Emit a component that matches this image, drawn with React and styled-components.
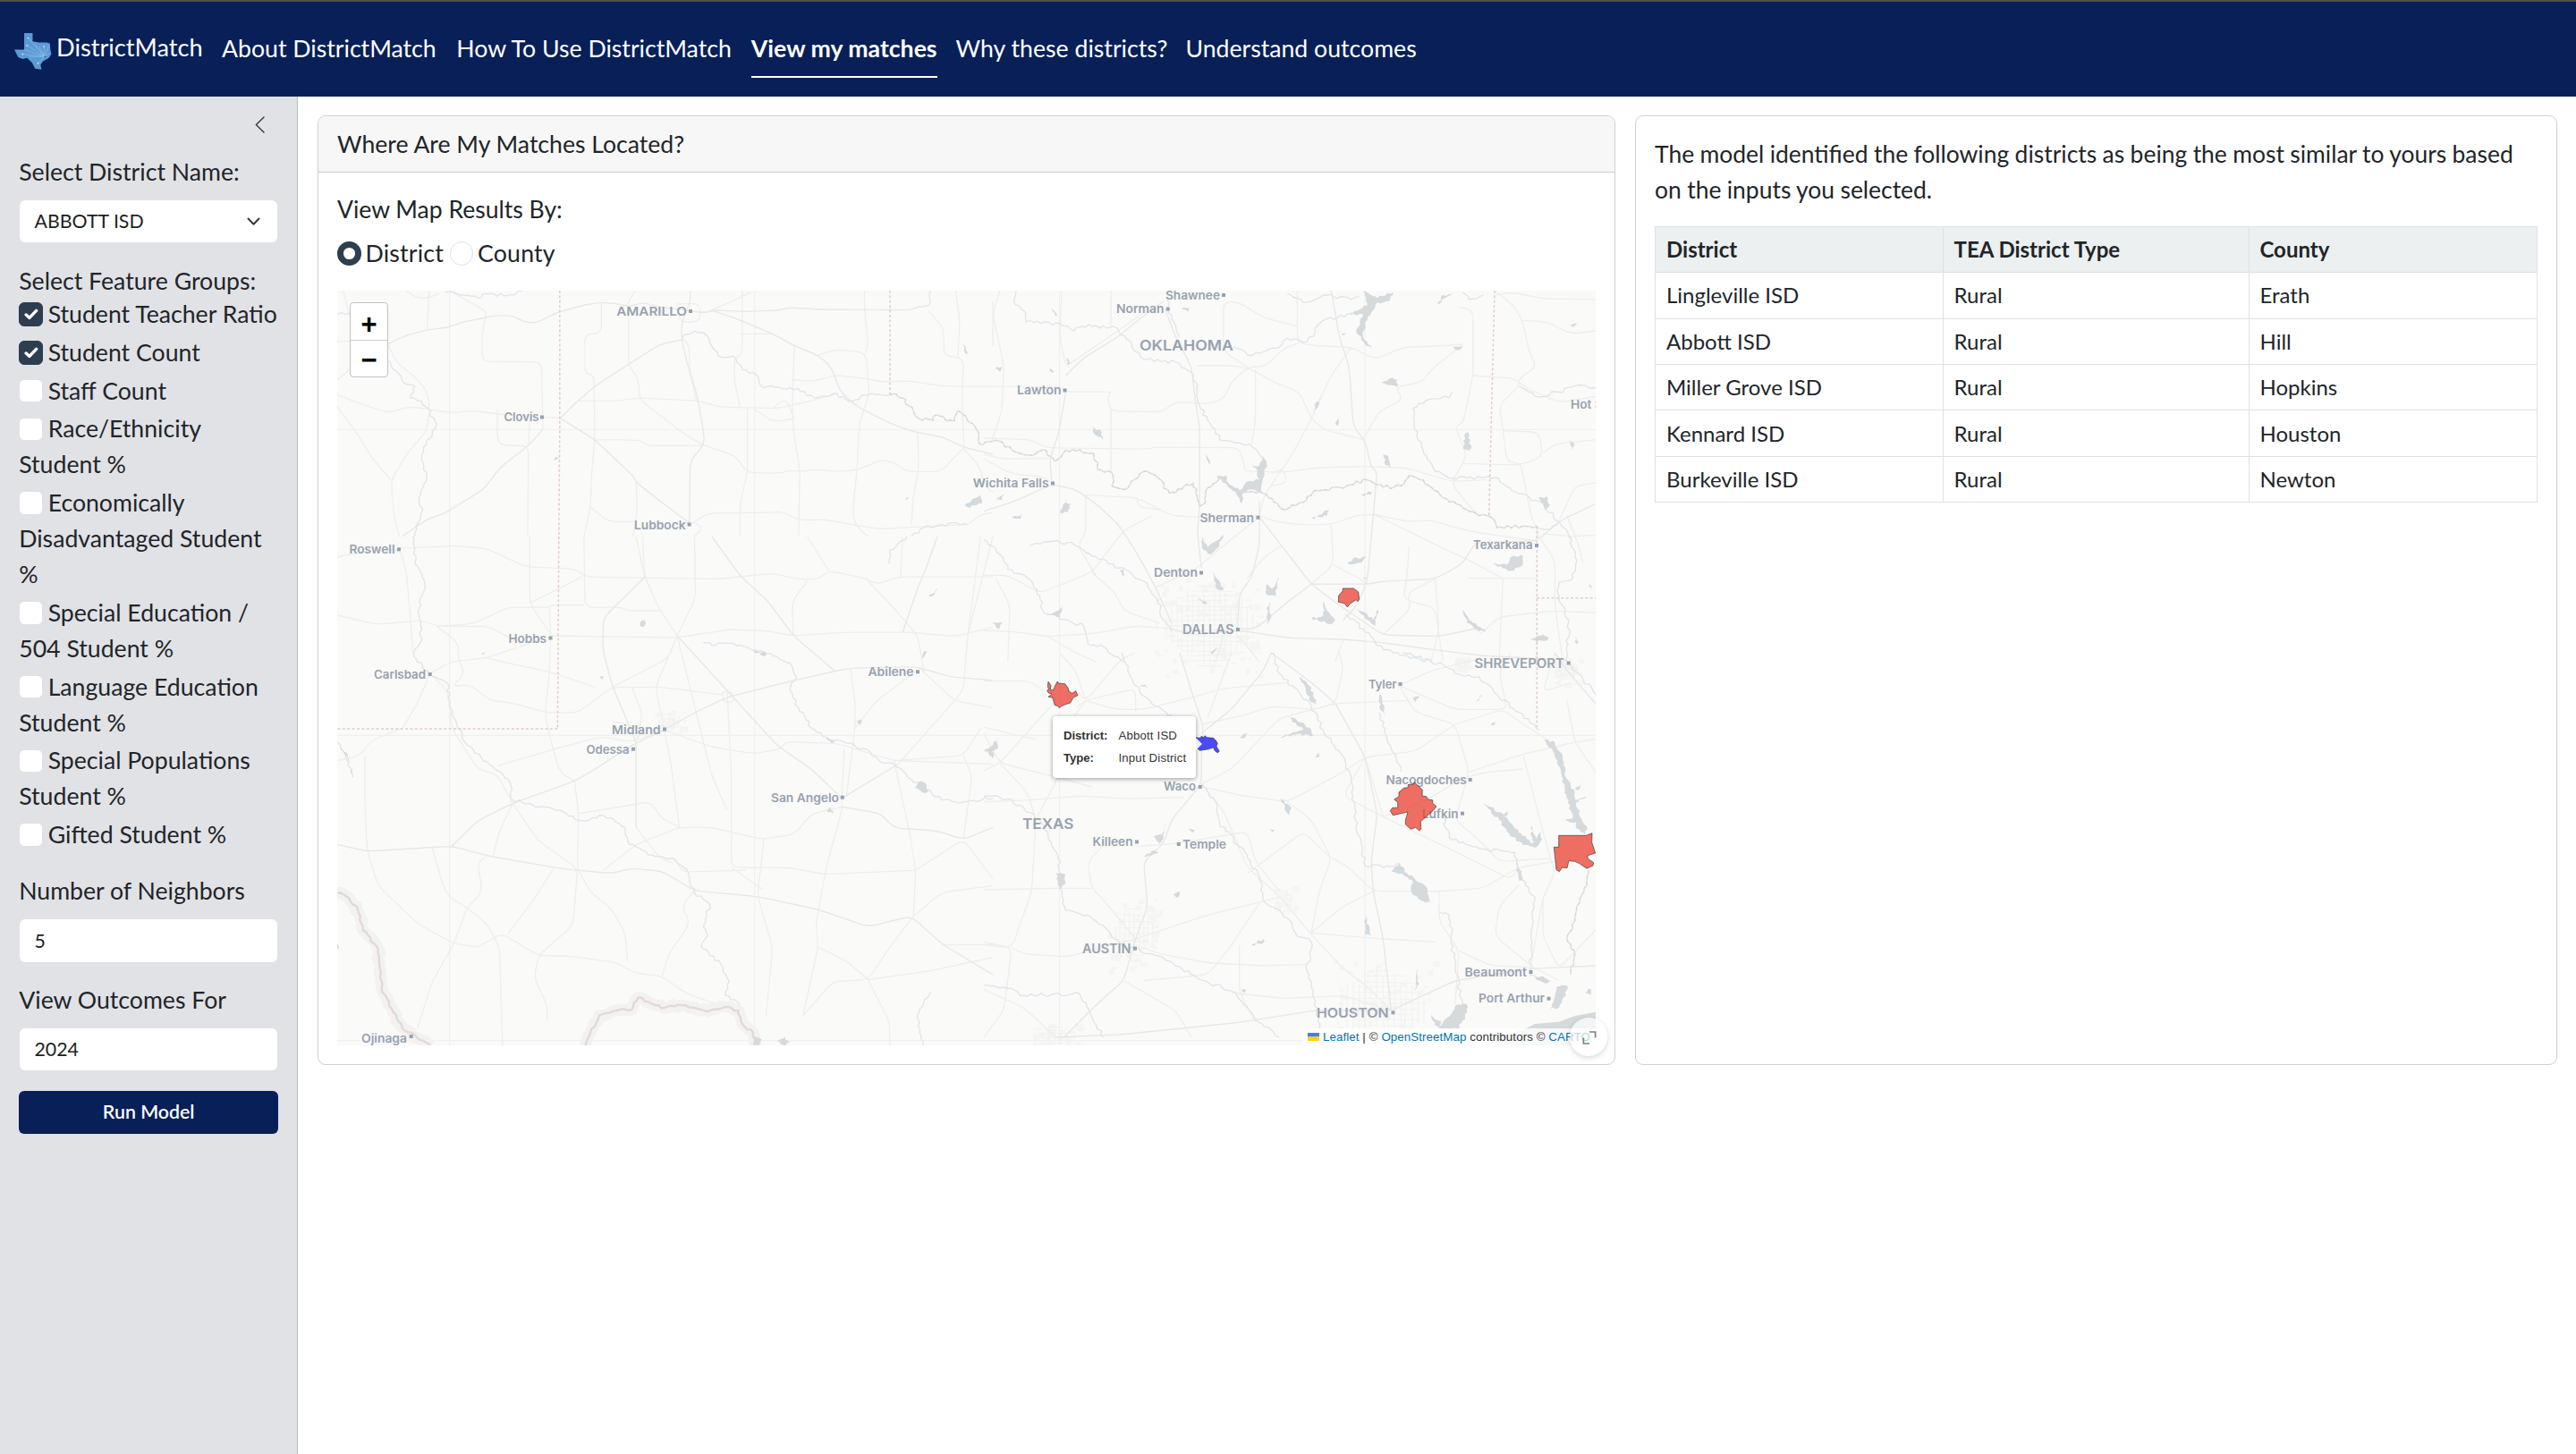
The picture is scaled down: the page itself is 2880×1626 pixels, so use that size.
import React from "react";
import styled, { createGlobalStyle } from "styled-components";

const GlobalStyle = createGlobalStyle`
  *, *::before, *::after { box-sizing: border-box; }
  html, body { margin: 0; padding: 0; background: #fff; }
  body {
    font-family: Lato, "Liberation Sans", sans-serif;
    font-size: 26.67px;
    line-height: 40px;
    color: #212529;
    -webkit-font-smoothing: antialiased;
  }
`;

const NAVY = "#081f58";

/* ---------- shell ---------- */

const Page = styled.div`
  display: flex;
  flex-direction: column;
  height: 1626px;
  overflow: hidden;
`;

const Navbar = styled.nav`
  display: flex;
  align-items: flex-start;
  height: 108px;
  padding: 31.7px 16px 0;
  border-top: 2px solid #4f4f4f;
  background: ${NAVY};
  color: #fff;
`;

const Brand = styled.div`
  display: flex;
  align-items: flex-start;
  width: 232px;
  height: 40px;
  margin-top: -1px;
  font-size: 27.2px;
  white-space: nowrap;

  svg {
    flex: none;
    width: 42px;
    height: 41px;
    margin: 4px 5px 0 0;
  }
`;

const NavItem = styled.a`
  height: 53.3px;
  margin-right: ${(p) => p.$gap}px;
  white-space: nowrap;
  color: #fff;
  font-weight: ${(p) => (p.$active ? 700 : 400)};
  border-bottom: 2px solid ${(p) => (p.$active ? "#fff" : "transparent")};
`;

const Body = styled.div`
  display: flex;
  flex: 1;
  min-height: 0;
`;

/* ---------- sidebar ---------- */

const Sidebar = styled.aside`
  flex: none;
  width: 333px;
  padding: 0 22px 0 21.2px;
  background: #e1e2e6;
  border-right: 1px solid #b9bbc0;
`;

const CollapseRow = styled.div`
  display: flex;
  justify-content: flex-end;
  height: 63.7px;
  padding: 22px 14px 0 0;
`;

const Field = styled.div`
  margin-bottom: ${(p) => p.$gap || 22}px;
`;

const FieldLabel = styled.div`
  height: 40px;
  margin-bottom: ${(p) => (p.$tight ? -3.2 : 12)}px;
  white-space: nowrap;
`;

const Control = styled.div`
  display: flex;
  align-items: center;
  justify-content: space-between;
  height: 47.8px;
  margin-left: 0.8px;
  padding: 0 19px 1.4px 16.5px;
  border-radius: 6px;
  background: #fff;
  color: #1d1f21;
  font-size: 21.33px;

  svg { margin-top: 2px; }
`;

const CheckItem = styled.div`
  margin: 0 -8px 2.76px 0;
`;

const CheckBox = styled.span`
  display: inline-flex;
  align-items: center;
  justify-content: center;
  width: 26.67px;
  height: 26.67px;
  margin: 7.2px 5.8px 0 0;
  vertical-align: top;
  border: 1.67px solid ${(p) => (p.$on ? "#2c3e50" : "#dfe1e6")};
  border-radius: 6px;
  background: ${(p) => (p.$on ? "#2c3e50" : "#fff")};
  line-height: 0;
`;

const RunButton = styled.button`
  display: block;
  width: 290px;
  height: 48px;
  margin: 0;
  padding: 0 0 2px;
  border: 0;
  border-radius: 6px;
  background: ${NAVY};
  color: #fff;
  font: 600 21.33px/46px Lato, "Liberation Sans", sans-serif;
  text-align: center;
`;

/* ---------- main ---------- */

const Main = styled.main`
  display: grid;
  grid-template-columns: 1451px 1031px;
  grid-template-rows: 1062px;
  gap: 22px;
  padding: 21px 21px 0 22px;
`;

const Card = styled.section`
  display: flex;
  flex-direction: column;
  border: 1px solid #cfd0d1;
  border-radius: 9px;
  background: #fff;
`;

const CardHeader = styled.header`
  height: 63px;
  padding: 10.7px 21px 0;
  border-bottom: 1px solid #cbcccd;
  border-radius: 8px 8px 0 0;
  background: #f7f7f7;
  font-size: 26.6px;
`;

const CardBody = styled.div`
  display: flex;
  flex-direction: column;
  flex: 1;
  padding: 21.2px 21px 21px;
`;

const MapTitle = styled.div`
  font-size: 26.55px;
`;

const RadioRow = styled.div`
  display: flex;
  align-items: flex-start;
  height: 40px;
  margin: 8.6px 0 22.2px;
`;

const RadioLabel = styled.label`
  display: flex;
  align-items: flex-start;
  margin-right: 6.4px;
  letter-spacing: 0.22px;
`;

const Radio = styled.span`
  width: 26.67px;
  height: 26.67px;
  margin: 7.6px 4.8px 0 0;
  border: ${(p) => (p.$on ? "7px solid #2c3e50" : "1.4px solid #dfe1e6")};
  border-radius: 50%;
  background: #fff;
`;

const Intro = styled.p`
  margin: 0.7px 0 21.3px;
  font-size: 26.45px;
  word-spacing: -0.36px;
`;

/* ---------- table ---------- */

const Table = styled.table`
  width: 986.5px;
  border-collapse: collapse;
  table-layout: fixed;
  font-size: 24px;
  line-height: 36px;
`;

const cell = `
  padding: 0 0 0 12px;
  border: 1px solid #dee2e6;
  text-align: left;
  vertical-align: middle;
`;

const Th = styled.th`
  ${cell}
  height: 51px;
  width: ${(p) => p.$w}px;
  background: #ecf0f1;
  font-weight: 700;
`;

const Td = styled.td`
  ${cell}
  height: 51.4px;
`;

/* ---------- map ---------- */

const MapFrame = styled.div`
  position: relative;
  width: 1407px;
  height: 844px;
  background: #fafaf8;
`;

const MapSvg = styled.svg`
  display: block;
  width: 1407px;
  height: 844px;
  overflow: hidden;
`;

const ZoomControl = styled.div`
  position: absolute;
  left: 14px;
  top: 13.4px;
  width: 43px;
  height: 83.5px;
  border: 1.6px solid #c2c3c2;
  border-radius: 4px;
  background: #fff;
`;

const ZoomButton = styled.div`
  display: flex;
  align-items: center;
  justify-content: center;
  height: 40.2px;
  padding-top: ${(p) => (p.$first ? 7 : 5)}px;
  border-top: ${(p) => (p.$first ? "0" : "1px solid #ccc")};
  color: #000;
  font: 700 31px/36px "Liberation Sans", Arial, sans-serif;
`;

const Tooltip = styled.div`
  position: absolute;
  left: 800px;
  top: 475.6px;
  width: 160px;
  height: 69.6px;
  padding: 9px 0 0 12px;
  border-radius: 4px;
  background: rgba(255, 255, 255, 0.98);
  box-shadow: 0 1px 5px rgba(0, 0, 0, 0.4);
  color: #333;
  font: 13.2px/25.2px "Liberation Sans", Arial, sans-serif;

  &::after {
    content: "";
    position: absolute;
    left: 160px;
    top: 24px;
    border: 7px solid transparent;
    border-right: 0;
    border-left-color: rgba(255, 255, 255, 0.9);
  }
`;

const TooltipRow = styled.div`
  display: grid;
  grid-template-columns: 61.5px 1fr;
  white-space: nowrap;
  letter-spacing: 0.18px;

  b { letter-spacing: -0.05px; }
`;

const Attribution = styled.div`
  position: absolute;
  right: 0;
  bottom: 0;
  display: flex;
  align-items: center;
  width: 329px;
  height: 19px;
  padding-left: 7px;
  background: rgba(255, 255, 255, 0.8);
  color: #333;
  font: 13.33px/19px "Liberation Sans", Arial, sans-serif;
  letter-spacing: 0.08px;
  white-space: pre;

  svg { margin-right: 4px; }
  a { color: #0078a8; }
`;

const FullScreen = styled.div`
  position: absolute;
  left: 1378px;
  top: 813px;
  width: 42px;
  height: 43px;
  border-radius: 50%;
  background: rgba(255, 255, 255, 0.7);
  box-shadow: 0 2px 6px rgba(0, 0, 0, 0.16);

  svg { display: block; margin: 14.5px 0 0 12.5px; }
`;

/* Deterministic noise used to roughen rivers and shorelines. */
function seeded(seed) {
  let s = seed % 2147483647;
  return () => {
    s = (s * 16807) % 2147483647;
    return s / 2147483647 - 0.5;
  };
}

const QUADS = {
  nw: { x: 350, y: 120, sx: 760 / 1568, sy: 1 / 3 },
  ne: { x: 1100, y: 310, sx: 700 / 1568, sy: 1 / 3 },
  se: { x: 1100, y: 730, sx: 700 / 1568, sy: 1 / 3 },
  sw: { x: 350, y: 600, sx: 760 / 1568, sy: 600 / 1568 },
};

function project(quad, text) {
  const q = QUADS[quad];
  const n = text.trim().split(/\s+/).map(Number);
  const out = [];
  for (let i = 0; i + 1 < n.length; i += 2) out.push([q.x + n[i] * q.sx, q.y + n[i + 1] * q.sy]);
  return out;
}

const toPath = (pts) => "M" + pts.map(([x, y]) => `${x.toFixed(1)} ${y.toFixed(1)}`).join("L");

function roughen(pts, amp, step, closed) {
  const rnd = seeded(Math.round(pts[0][0] * 31 + pts[0][1] * 17 + pts.length * 101) + 7);
  const src = closed ? [...pts, pts[0]] : pts;
  const out = [src[0]];
  for (let i = 1; i < src.length; i++) {
    const [ax, ay] = src[i - 1];
    const [bx, by] = src[i];
    const len = Math.hypot(bx - ax, by - ay) || 1;
    const k = Math.max(1, Math.round(len / step));
    for (let j = 1; j < k; j++) {
      const t = j / k;
      const d = rnd() * 2 * amp;
      out.push([ax + (bx - ax) * t - ((by - ay) / len) * d, ay + (by - ay) * t + ((bx - ax) / len) * d]);
    }
    out.push([bx, by]);
  }
  return out;
}

const lines = (data, fn) =>
  Object.entries(data)
    .map(([quad, list]) => list.map((l) => fn(project(quad, l))).join(""))
    .join("");

/* rounds the corners of a polyline by running curves through segment midpoints */
function smooth(pts) {
  if (pts.length < 3) return toPath(pts);
  let d = `M${pts[0][0].toFixed(1)} ${pts[0][1].toFixed(1)}`;
  for (let i = 1; i < pts.length - 1; i++) {
    const [px, py] = pts[i - 1];
    const [x, y] = pts[i];
    const [nx, ny] = pts[i + 1];
    const near = (ax, ay) => {
      const l = Math.hypot(ax - x, ay - y) || 1;
      const r = Math.min(l / 2, 9);
      return [x + ((ax - x) / l) * r, y + ((ay - y) / l) * r];
    };
    const a = near(px, py);
    const b = near(nx, ny);
    d += `L${a[0].toFixed(1)} ${a[1].toFixed(1)}Q${x.toFixed(1)} ${y.toFixed(1)} ${b[0].toFixed(1)} ${b[1].toFixed(1)}`;
  }
  const e = pts[pts.length - 1];
  return d + `L${e[0].toFixed(1)} ${e[1].toFixed(1)}`;
}

const HIGHWAYS = {
  nw: [
    "172 795 205 770 265 745 310 740 345 720 390 708 410 700 460 698 485 720 515 724 560 690 625 663 660 655 700 658 725 668 745 663 760 655 800 670 870 683 905 690 925 680 990 685 1060 682 1085 678 1095 672 1165 678 1380 680 1395 668 1418 668 1425 655 1420 625 1425 615",
    "570 1043 600 1000 650 935 730 860 800 795 850 780",
    "570 1043 650 1115 740 1240 745 1258 835 1360 870 1395",
    "870 615 870 655 850 720 850 780 865 870 885 960 900 1080 903 1130 870 1185 868 1400",
    "915 680 970 705 1060 760 1110 800 1165 832 1195 870 1215 950 1250 1000 1330 1060 1390 1090 1450 1105 1500 1140 1568 1165",
    "530 1080 497 1135 430 1210 395 1280 300 1365 265 1380 205 1440",
  ],
  ne: [
    "205 385 188 520 165 610 170 690",
    "205 330 250 270 330 205 400 130 450 80",
    "455 110 480 200 520 300 530 420 540 500 540 770 535 860 545 975",
    "870 45 890 200 915 300 925 500 955 550 970 640 985 650 975 800 960 1020 935 1100 900 1150",
    "0 785 80 750 170 695 230 712 290 770 340 835 385 930 430 1040 470 1160",
    "690 805 745 900 820 1030 900 1110 1000 1200 1140 1205 1230 1180",
    "820 1030 960 1030 1000 1020 1130 1012 1200 960 1230 890 1385 885 1440 820 1532 760",
    "820 1030 760 1090 680 1180 640 1180",
    "470 1180 520 1200 640 1185 760 1210 900 1215 990 1225 1100 1245 1250 1270 1460 1285",
    "690 750 690 805 690 900 670 1010 640 1060 635 1180",
  ],
  se: [
    "490 0 520 130 550 250 545 330 545 440 470 560 450 640 400 700 410 850 380 960 350 1100 290 1170 200 1290",
    "545 270 620 190 700 60 720 0",
    "880 170 955 350 985 540 970 700 975 800 1000 960 1020 1200",
    "720 0 830 110 880 170",
    "180 1290 350 1280 640 1240 830 1200 1020 1200 1180 1100 1370 1060 1532 1050",
    "1430 0 1460 60 1532 170",
  ],
  sw: [
    "56 900 125 920 320 905 410 935 570 970 690 985 730 970 805 978 880 1035 1025 1052 1165 1090 1280 1140 1380 1110 1450 1190 1568 1280",
    "320 905 380 830 460 780 603 715 650 680 735 610 810 565 880 515 955 470 1095 425 1235 385 1390 380 1470 410 1568 420",
    "920 0 985 115 1050 190 1108 290 1205 395",
    "765 118 670 237 668 330 690 435 745 600 745 850",
    "840 290 955 450 1070 610 1150 680 1220 765",
    "1440 0 1415 90 1395 150 1360 280",
    "1220 790 1310 810 1340 852 1440 860 1500 885 1568 850",
    "1220 765 1350 665",
  ],
};

const ROADS = {
  nw: [
    "56 785 84 785",
    "172 795 195 860 240 910 265 960 268 1010 263 1085 220 1155 180 1250 187 1380 200 1440",
    "315 615 345 640 400 685 398 705 390 760 390 853 527 854 530 1080",
    "665 655 665 760 627 760 627 895 648 897 650 1115 642 1240 640 1340 625 1440",
    "850 770 868 800 868 880 885 990",
    "1165 832 1205 812 1275 823 1280 910 1283 960 1260 1060 1255 1210 1245 1350 1250 1400 1280 1440",
    "728 668 728 870 750 905 753 980 860 1100 903 1135 975 1170 1000 1225 1080 1228 1095 1218 1130 1222 1155 1215 1215 1222 1260 1215 1315 1180 1350 1200 1370 1222 1450 1222 1475 1180 1500 1145",
    "610 985 700 985 750 975 895 985 930 1005 1015 1008 1070 1010 1150 985 1210 960",
    "650 1115 755 1117 770 1135 900 1135",
    "56 965 120 1000 175 1025 205 1010 230 1005 320 1025 370 1018 420 1028 570 1043",
    "56 1005 95 1080 140 1185 180 1250",
    "215 615 240 640 265 640 290 625",
    "268 615 263 745",
    "743 615 722 668",
    "56 915 84 880",
    "70 615 84 700",
    "990 615 990 830 972 840 972 920 985 1005",
    "905 690 990 635 1010 620",
    "985 760 1060 760",
    "1272 615 1272 680 1280 790 1275 823",
    "1110 800 1105 1015 1110 1110 1123 1210 1120 1440",
    "1105 915 1160 918 1205 898 1283 912 1315 922 1375 918 1450 935 1568 937",
    "1420 685 1455 740 1455 835 1500 840 1497 1000 1502 1145",
    "1482 615 1492 720 1487 840",
    "1568 650 1568 800",
    "1002 1010 1002 1225 985 1330 985 1440",
    "1018 1012 1060 1055 1110 1045",
    "1110 1045 1090 975 1060 1010",
    "870 1400 910 1362 1040 1360 1085 1357 1110 1380 1140 1385 1180 1383 1245 1400 1310 1415 1360 1410 1510 1400",
    "425 1010 425 1120 440 1135 497 1135 495 1440",
    "497 1135 500 1040",
    "640 1340 680 1390 740 1390",
    "745 1258 748 1350 738 1440",
    "1395 1090 1397 1215 1385 1300 1380 1400",
    "1500 1145 1535 1200 1555 1280 1568 1290",
    "840 660 893 658 893 720 845 720 840 660",
    "1510 1400 1540 1365 1568 1360",
    "835 1415 870 1385 900 1410 880 1440",
  ],
  ne: [
    "40 45 22 120 50 300 45 450 20 550",
    "0 367 200 367 205 385 318 385",
    "195 45 190 200 205 300 330 185 420 100",
    "318 45 318 160",
    "318 385 310 400 315 440 330 450 445 452 480 418 560 425 600 410 620 350 665 300 705 300 750 240 790 220",
    "318 440 318 660",
    "535 297 625 297 665 305 730 355 790 385 820 475 850 510 950 545",
    "665 305 600 250 600 80 640 85 700 135 785 165",
    "680 310 680 490 670 560",
    "785 45 785 220 830 230 920 235 980 275 1050 235 1150 230 1200 225",
    "920 235 870 330 820 475 770 600 740 655 700 740 690 800",
    "950 545 990 450 1050 410 1030 370 1100 350 1120 310 1200 225",
    "1190 100 1225 110 1225 330 1200 490 1180 500 1210 600 1170 690 1210 760 1240 800",
    "1225 330 1330 340 1355 370 1440 420 1532 400",
    "1280 45 1330 100 1350 150 1365 250 1385 300 1340 340 1340 365 1290 430 1300 510 1310 620 1345 625 1370 800 1390 860",
    "1280 60 1320 50 1400 72 1532 75",
    "1350 145 1410 150 1470 190 1532 180",
    "1300 515 1390 520 1400 600 1345 630 1200 625",
    "1400 590 1430 560 1532 545",
    "655 650 740 655 850 638 970 635 1060 640 1170 685 1260 680",
    "0 540 120 545 155 572 410 577 430 570 640 572 655 650",
    "0 595 50 610 165 608",
    "255 730 385 740 470 800 540 805 690 800",
    "255 735 255 860 235 900 280 1000",
    "385 740 385 770 440 780",
    "0 610 70 660 150 670 170 690",
    "690 800 730 820 790 830 870 830 930 800 975 795 1060 820 1120 815 1180 840 1250 860 1385 885",
    "975 795 1120 890 1230 960 1300 1010",
    "430 1040 530 980 600 900 690 805",
    "0 1185 80 1190 160 1205 280 1195 380 1170 470 1180",
    "0 1000 60 1000 140 1060 270 990 350 850 420 800",
    "270 990 330 1060 350 1120 440 1160",
    "1065 900 1060 1000 1050 1080 1130 1110 1150 1290",
    "1130 1012 1140 1180 1120 1290",
    "1300 1010 1290 1290",
    "1210 1010 1385 1010",
    "1385 860 1430 950 1430 1100 1450 1290",
    "60 1290 65 1100 30 1010",
    "635 1200 690 1290",
    "600 1200 580 1290",
    "870 830 875 965 820 1030",
    "875 965 940 1010 960 1030",
    "1000 1200 1070 1110 1060 1060 1130 1012",
    "1240 1200 1290 1140 1420 1120 1532 1125",
    "745 900 700 940 660 1010",
    "160 1205 230 1260 280 1290",
    "1400 860 1470 870 1532 865",
    "1440 820 1480 700 1532 690",
    "1460 800 1490 900 1500 960",
    "720 660 750 640 760 690 720 700",
    "900 1215 880 1290",
  ],
  se: [
    "0 95 115 95 150 130",
    "235 135 255 160 345 20 380 0",
    "255 160 190 280 185 420 130 560",
    "255 160 330 190 400 190 520 150 600 120 760 100",
    "255 160 230 60 190 0",
    "235 180 255 160 380 120 380 200",
    "545 240 650 210 720 180 830 190 880 170 1060 160",
    "620 0 560 220",
    "545 440 600 530 660 720 750 830 810 930 900 1060 960 1120 1020 1200",
    "545 440 620 390 740 220 880 170 900 50 890 0",
    "545 450 650 480 760 500 900 400 955 350 1080 330 1180 240",
    "0 500 100 495 250 480 350 490 500 485",
    "0 395 40 370 180 160",
    "40 370 110 470 130 560 120 800 70 990 0 980",
    "0 270 40 370 190 420 270 450",
    "0 795 190 790 270 790",
    "300 645 260 700 270 790 300 830 380 960",
    "70 990 100 1010 210 1020 380 960",
    "380 960 560 880 740 820",
    "380 980 440 1010 560 1040 700 1050 810 1045",
    "740 800 680 700 660 600 480 640 380 650",
    "660 740 800 600 870 690 905 710 975 800 1140 800 1250 790 1340 720 1430 700",
    "760 500 820 560 870 690 840 800 820 940",
    "690 840 610 1000 560 1080 400 1100",
    "620 1140 750 1160 900 1150 1020 1200",
    "0 1130 100 1190 180 1290",
    "1000 550 1100 500 1200 420 1260 400 1350 390",
    "1000 550 900 480 955 350",
    "1000 550 1200 680 1320 760 1340 720",
    "1215 400 1350 340 1480 300 1532 290",
    "1040 110 1080 200 1180 240 1215 400 1180 560 1250 640 1290 700 1420 690",
    "1180 240 1300 190 1340 230 1410 290",
    "1040 110 1180 190 1310 190 1290 60 1320 0",
    "1040 110 1120 60 1240 20",
    "1430 0 1400 130 1470 100",
    "1350 340 1400 600 1430 740 1400 820 1370 1050",
    "1140 800 1140 900 1190 1000 1180 1180",
    "1340 780 1290 850 1280 950 1370 1050 1440 1100",
    "1400 820 1400 950 1440 1060 1532 930",
    "1190 1000 1270 1050 1370 1055",
    "0 970 70 990 50 1200 0 1290",
    "640 980 640 1140 680 1240",
    "975 800 900 850 820 940",
    "820 940 1000 960 1130 970",
    "1460 160 1480 300 1532 400",
    "955 350 1000 550",
    "130 290 0 250",
    "350 1100 480 1200 520 1290",
  ],
  sw: [
    "200 35 330 27 400 35 490 88 605 95 630 118 935 124 1060 108 1120 125 1165 125 1190 100 1275 122 1300 140 1350 118 1568 118",
    "56 60 90 50 200 35 215 100 225 240 230 340",
    "56 230 145 257 250 245 285 262 405 262 490 322",
    "285 262 370 255 450 207 545 207 550 200 625 200",
    "625 0 627 207 710 207 725 217 800 217",
    "500 0 500 195 550 290",
    "500 195 620 118",
    "545 207 548 290 545 400 535 520 553 620 570 690 603 715",
    "548 290 840 295 960 272 1040 275 1110 290 1230 280 1380 280 1480 292 1568 265",
    "760 0 765 118 800 215 840 290",
    "880 0 882 180 840 290 790 440 825 660 845 850",
    "840 290 875 470 920 700 955 800",
    "745 0 765 118",
    "270 400 320 365 400 355 550 290",
    "270 400 240 490 205 562",
    "270 400 310 450 320 560 380 680 425 695 460 780",
    "285 262 335 310 335 360 350 400 320 440 360 432 410 480 455 485 540 515 610 515 690 440 800 440 945 462",
    "400 355 450 370 545 395 650 440",
    "690 440 820 355 840 290",
    "56 655 110 640 130 600 200 562",
    "120 640 120 800 125 920 150 1020 240 1130 325 1190 380 1200",
    "425 670 560 620 665 585 735 600 810 565 920 615 1020 635 1080 620 1090 600 1210 605 1340 655 1568 665",
    "460 780 520 890 610 970 605 1050 600 1135 520 1225 510 1290 540 1370 540 1418",
    "460 780 430 860 415 935",
    "610 970 640 1040 690 1090 720 1160 725 1240",
    "380 1200 435 1160 520 1225 580 1225 700 1245 740 1275 805 1285 860 1335 950 1375",
    "555 970 510 1060 450 1160",
    "275 910 295 1000 310 1050 355 1085 400 1130 430 1200 437 1487",
    "325 1190 355 1085 390 1040 380 950 400 935",
    "325 1190 275 1300 240 1440",
    "603 715 612 810 610 970",
    "612 810 780 775 800 820 845 850",
    "670 975 745 900 845 850 920 850 1035 885 1110 870 1150 810 1220 790",
    "745 600 760 560 690 540",
    "735 440 760 520 745 600",
    "745 850 800 940 830 955",
    "955 450 965 700 965 967 1100 968 1180 987 1390 975",
    "965 967 1035 1030",
    "1220 765 1220 800 1185 960 1160 1130 1165 1200 1130 1400",
    "1350 665 1500 450 1510 290 1568 0",
    "1040 885 1025 1050 1060 1200 1045 1400",
    "1220 765 1225 620",
    "1240 390 1250 480 1250 560 1230 760",
    "1340 655 1375 860 1390 975 1385 1110",
    "1390 975 1500 885 1568 1000",
    "1385 1110 1330 1200 1280 1295 1200 1300 1130 1400",
    "1385 1110 1450 1040 1568 1020",
    "1280 1295 1330 1420 1330 1487",
    "1280 1295 1420 1270 1568 1230",
    "1450 1193 1568 1193",
    "1395 390 1300 480 1250 560",
    "1395 380 1480 480 1568 500",
    "1340 655 1500 640 1540 560",
    "1190 100 1140 0",
    "1108 290 1105 190 1140 130",
    "1165 1200 1230 1240 1280 1295",
    "835 940 850 980 1000 975",
    "880 1035 850 1080 870 1130 820 1220 805 1285",
    "1275 122 1340 210 1395 290 1410 400",
    "1500 885 1520 700 1500 640",
    "945 455 970 455 970 485 945 485 945 455",
    "1360 0 1355 118",
    "1540 0 1510 290",
  ],
};

const RIVERS = {
  nw: [
    "172 850 180 865 195 890 205 915 220 930 235 935 225 975 250 985 265 1010 285 1065 275 1100 255 1140 250 1180 262 1250 248 1300 250 1360 235 1440",
    "305 620 340 630 380 640 400 625 440 632 482 617",
    "56 695 84 690",
    "852 770 880 750 900 755 915 790 935 835 970 835 990 880 1015 890 1040 940 1100 940 1165 975 1200 960 1245 985 1280 965 1331 965",
    "1380 1438 1410 1410 1450 1400 1510 1400",
  ],
  ne: [
    "80 45 75 80 105 120 105 150 190 155 225 180 245 165 325 165 370 225 400 275 480 285 520 320 535 360 540 430 560 480 580 510 590 545 665 560 705 615 700 640",
    "625 235 660 260 700 250 740 235 760 205 810 215 850 145 920 125 960 100",
    "760 55 800 85 860 60 920 75 940 65",
    "460 75 470 140 490 200",
    "1172 385 1165 405 1115 410 1075 440 1078 510 1100 580 1125 640 1175 675 1280 672 1330 720 1400 760 1440 820 1420 845 1385 840",
    "1440 820 1465 870 1485 950 1475 1010 1440 1025 1440 1085 1465 1150 1460 1290",
    "115 900 150 888 210 890 270 935 340 975 400 1020 435 1080 450 1150 470 1190",
    "0 880 40 930 60 980 110 1010 140 1070 150 1125 210 1150 250 1170 260 1230 300 1240 350 1290",
    "905 1130 950 1180 1000 1250 1060 1270 1120 1290",
    "1340 365 1380 400 1440 385 1480 365 1532 370",
    "1200 50 1215 75 1250 60",
  ],
  se: [
    "345 0 360 60 380 110 420 170 470 210 490 260",
    "545 440 580 500 590 570 640 650 690 750 700 830 760 890 780 940 820 970 810 1070 830 1170 840 1260",
    "725 0 740 70 820 180 850 260 890 330 920 420 930 560 945 640 955 715 1010 715 1045 710",
    "1140 870 1165 880 1170 960 1180 1060 1195 1160 1200 1190",
    "990 200 1010 290 1045 400",
    "1150 540 1165 620 1260 660 1330 670 1340 740 1380 830 1370 950 1368 1080 1410 1110",
    "1050 0 1150 40 1180 70 1240 80 1290 150 1340 200 1390 260",
    "0 480 60 490 100 520 150 580 185 680 195 760 190 790 205 865 260 880 310 930 345 980 420 1010 480 1050 550 1100 630 1140 680 1230 740 1290",
    "0 1115 60 1125 100 1150 240 1145 270 1220 300 1290",
    "1532 140 1490 70 1465 40",
  ],
  sw: [
    "230 0 235 80 258 140 245 190 245 240 252 300 232 350 270 400 310 430 320 520 350 600 420 680 450 710 460 770 520 790 570 800 620 830 670 815 720 850 730 900 790 935 830 940 865 980 880 1040 915 1075 900 1140 910 1165 895 1195 940 1250 960 1300 950 1340 985 1370",
    "900 310 920 318 960 312 1010 330 1070 350 1100 370 1115 410 1100 450 1120 500 1150 560 1200 595 1270 620 1310 660 1340 665 1380 710 1450 770 1500 775 1568 765",
    "1425 1330 1400 1380 1395 1430 1408 1487",
    "1330 80 1330 40 1370 0",
    "56 600 75 640 88 690",
  ],
};

const LAKES = {
  nw: [
    "1498 795 1506 805 1510 828 1502 815",
    "1503 1335 1520 1315 1540 1300 1542 1330 1520 1335 1510 1342",
    "1365 1315 1375 1308 1370 1316",
    "555 1185 562 1172 567 1178",
  ],
  ne: [
    "583 668 605 665 612 690 640 715 660 685 690 680 685 650 672 630 690 632 700 600 708 625 697 690 697 725 670 712 650 722 645 760 632 725 610 700",
    "950 45 985 70 1025 50 1015 80 985 85 970 120 955 150 950 200 970 240 945 210 933 180 950 125 915 122 960 95",
    "1135 90 1150 60 1185 55 1155 70",
    "995 355 1015 340 1035 345 1035 368 1020 362",
    "270 500 295 520 298 545 280 530",
    "825 455 832 420 845 400 835 440",
    "1000 595 1013 600 1018 640 1006 630",
    "1175 235 1200 230 1190 245",
    "1200 575 1205 525 1212 520 1220 575 1210 580",
    "545 870 560 905 600 865 590 900 568 930 550 915",
    "570 985 590 1020 600 1050 582 1045",
    "910 960 930 940 958 940 945 958",
    "820 808 850 790 865 775 860 800 840 805",
    "945 730 975 715 970 730",
    "1275 960 1310 965 1325 935 1350 935 1350 965 1320 985",
    "1388 740 1410 735 1418 765 1405 780",
    "850 1088 860 1120 880 1150 870 1165 820 1145 850 1135",
    "930 1110 960 1130 975 1150 990 1105 980 1170 960 1150",
    "1200 1115 1215 1150 1258 1188 1240 1188 1210 1160",
    "1368 1215 1400 1200 1415 1212 1385 1225",
    "708 1030 722 1045 738 1005 730 1070 708 1065",
    "715 1090 720 1140 710 1168 708 1110",
    "20 1160 48 1160 38 1180",
    "155 1135 185 1120 200 1100 190 1140",
    "190 790 205 755 218 760 210 790",
    "70 805 95 795 92 810",
    "340 985 350 980 350 1005",
    "555 595 563 610 566 630",
    "28 305 45 300 40 318",
    "208 270 216 290 208 295",
    "165 305 176 318 170 320",
    "170 105 184 130 178 130",
    "495 105 520 98 512 115",
    "880 490 890 470 886 500",
    "1465 545 1480 560 1474 578",
    "1468 160 1486 158 1475 168",
    "1515 1020 1522 1040 1522 1060",
    "1480 1205 1490 1225 1484 1230",
    "30 745 52 730 45 748",
    "568 1260 585 1240 572 1265",
    "535 1075 560 1095 555 1098",
    "895 190 905 188 902 196",
    "950 1008 958 1008 955 1015",
  ],
  se: [
    "1400 290 1430 300 1450 350 1458 420 1480 470 1490 540 1512 590 1505 610 1485 590 1470 530 1455 460 1440 380 1425 330",
    "1480 455 1505 430 1488 462",
    "1465 495 1510 485 1475 505",
    "1455 560 1490 548 1480 570",
    "1250 505 1300 540 1330 590 1375 640 1395 600 1398 625 1380 655 1350 645 1310 600 1290 560",
    "1300 545 1312 530 1308 560",
    "1372 580 1378 610 1385 640 1372 630",
    "1020 735 1040 705 1060 740 1090 770 1110 790 1120 840 1095 830 1070 800 1075 770 1045 740",
    "1135 1260 1165 1220 1180 1185 1210 1180 1205 1230 1185 1262",
    "1435 1120 1460 1115 1458 1150 1440 1190 1418 1195",
    "742 285 770 270 800 258 760 215 800 235 820 260 825 278 780 275",
    "790 80 815 110 835 175 820 165",
    "990 130 998 170 1005 215 992 190",
    "180 740 205 745 205 770 190 795",
    "955 875 970 950 955 945",
    "740 485 770 520 765 545",
    "670 980 700 960 710 970",
    "1335 700 1350 760 1340 765",
    "425 615 445 610 455 575 450 620 440 640",
    "1085 1060 1090 1110 1080 1135",
    "640 285 662 270 655 285",
    "400 685 420 665 438 672",
    "475 810 490 800 484 822",
    "512 590 528 595 524 604",
    "712 592 728 595 722 604",
    "1258 238 1282 236 1272 244",
    "1232 165 1250 140 1240 160",
    "1075 150 1090 145 1082 165",
    "1505 1140 1520 1128 1520 1148",
    "1380 1090 1400 1085 1425 1105 1405 1108",
    "0 330 30 295 36 320 20 332",
    "830 350 838 335 840 350",
    "645 1130 655 1128 655 1140",
    "390 110 405 108 410 120",
    "1120 1215 1130 1230 1145 1235 1140 1255 1130 1250",
  ],
  sw: [
    "1185 802 1195 790 1200 810",
    "1400 715 1412 720 1420 745 1405 748 1398 740 1388 735",
    "1185 588 1205 600 1195 603",
    "1015 335 1045 340 1040 350",
    "755 250 765 245 765 262 758 265",
    "660 412 670 408 668 418",
    "1405 358 1410 335 1416 335 1410 350",
    "1420 175 1440 150 1434 168",
    "1254 540 1265 535 1262 550",
    "1015 1460 1035 1470 1030 1487 1015 1487",
    "1070 1475 1088 1462 1100 1480 1085 1487",
    "56 600 80 640 86 665 70 630",
    "86 680 93 700 90 705",
    "56 1190 62 1215 58 1205",
    "1555 625 1568 630 1568 650 1560 640",
    "388 343 396 338 394 345",
  ],
};

const GULF = "1350 1265 1380 1245 1440 1238 1480 1218 1532 1205 1532 1316 1300 1316 1250 1300";

const STATE_LINES = {
  nw: ["569 615 569 1080 567 1440", "1331 615 1331 965"],
  ne: ["1279 45 1270 512 1265 805", "1385 835 1385 1290", "1385 1076 1532 1076"],
  se: ["1385 0 1385 250"],
  sw: ["567 0 564 560", "564 562 56 562"],
};

const BORDER_RIVERS = {
  nw: ["1331 965 1345 962 1360 975 1372 1000 1385 1020 1405 1050 1430 1050 1437 1032 1470 1050 1480 1052 1487 1018 1505 1035 1520 1060 1530 1080 1535 1125 1548 1130"],
  ne: ["0 555 40 550 70 580 115 597 150 578 178 618 205 580 275 590 285 645 320 655 320 700 350 712 400 652 430 665 465 725 495 712 525 690 540 768 555 755 555 720 595 670 620 710 655 720 700 725 755 780 800 755 830 715 890 705 960 680 1000 705 1045 700 1065 665 1100 680 1150 740 1200 775 1240 800 1270 805 1285 840 1385 835"],
  se: ["1515 730 1510 780 1485 850 1480 900 1460 960 1480 1010 1470 1080"],
};

const NATION = {
  sw: [
    "56 1040 75 1050 100 1080 115 1150 150 1205 158 1320 185 1390 205 1435 240 1465 272 1490",
    "628 1490 640 1450 660 1400 700 1385 735 1383 750 1347 790 1370 810 1378 850 1370 910 1388 950 1375 980 1385 990 1425 1015 1450 1020 1490",
  ],
};

/* urban street grids: centre, radius, density */
const CITIES = [
  { x: 1352, y: 700, rx: 52, ry: 48, n: 8 },
  { x: 1546, y: 1128, rx: 50, ry: 46, n: 7 },
  { x: 1268, y: 1045, rx: 24, ry: 34, n: 4 },
  { x: 1180, y: 1160, rx: 26, ry: 14, n: 3 },
  { x: 1634, y: 742, rx: 8, ry: 7, n: 2 },
  { x: 1752, y: 750, rx: 14, ry: 12, n: 3 },
  { x: 748, y: 808, rx: 14, ry: 12, n: 2 },
  { x: 1436, y: 1005, rx: 10, ry: 12, n: 2 },
];

function cityStreets({ x, y, rx, ry, n }) {
  const rnd = seeded(x * 3 + y);
  let d = "";
  for (let i = -n; i <= n; i++) {
    const t = i / (n + 0.6);
    const h = Math.sqrt(1 - t * t);
    const a = 0.5 + (rnd() + 0.5) * 0.5;
    const b = 0.5 + (rnd() + 0.5) * 0.5;
    d += `M${x + t * rx} ${y - ry * h * a}l${rnd() * 3} ${ry * h * (a + b)}`;
    d += `M${x - rx * h * b} ${y + t * ry}l${rx * h * (a + b)} ${rnd() * 4}`;
  }
  return d;
}

function cityBlocks({ x, y, rx, ry, n }) {
  const rnd = seeded(x * 7 + y * 5);
  let d = "";
  for (let i = 0; i < n * 12; i++) {
    const px = x + rnd() * rx * 2.4;
    const py = y + rnd() * ry * 2.4;
    const w = 2 + (rnd() + 0.5) * 6;
    const h = 2 + (rnd() + 0.5) * 5;
    d += `M${px.toFixed(1)} ${py.toFixed(1)}h${w.toFixed(1)}v${h.toFixed(1)}h-${w.toFixed(1)}z`;
  }
  return d;
}

/* name, x start, x end, baseline, font size, marker x, marker y */
const PLACES = [
  ["AMARILLO", 689.3, 768, 353.3, 13.6, 772, 348],
  ["Clovis", 563.5, 602.5, 471, 13.2, 606, 466.5],
  ["Lubbock", 709, 766.5, 591.5, 13.2, 770.6, 586.5],
  ["Wichita Falls", 1087.8, 1172.5, 545, 13.2, 1177, 540.5],
  ["Fort Smith", 1597, 1666, 325.4, 13.2, 1670, 321],
  ["Shawnee", 1303, 1364, 335, 13.2, 1368, 330],
  ["Norman", 1248, 1301.5, 349.7, 13.2, 1305.7, 345.5],
  ["OKLAHOMA", 1274, 1379, 391.5, 16.2, 0, 0],
  ["Lawton", 1137, 1186.5, 441, 13.2, 1190.5, 436.5],
  ["Hot Springs", 1756, 1834, 456.7, 13.2, 0, 0],
  ["Sherman", 1341.5, 1402, 583.7, 13.2, 1406.5, 578.7],
  ["Denton", 1290, 1339, 645, 13.2, 1343, 640.5],
  ["DALLAS", 1322, 1379.5, 709, 13.8, 1384, 704],
  ["Texarkana", 1647, 1713.5, 614.3, 13.2, 1718, 610],
  ["SHREVEPORT", 1648.5, 1749, 747, 13.8, 1753.7, 741.5],
  ["Tyler", 1530, 1561.5, 769.7, 13.2, 1565.5, 765],
  ["Waco", 1301, 1337, 884, 13.2, 1341.7, 880],
  ["Nacogdoches", 1549.5, 1639.5, 877, 13.2, 1643.7, 872],
  ["Lufkin", 1590, 1630.5, 914.5, 13.2, 1635, 909.7],
  ["TEXAS", 1143, 1200.5, 926.7, 16.2, 0, 0],
  ["Killeen", 1221.5, 1266.5, 945.7, 13.2, 1271, 941.5],
  ["Temple", 1322, 1371, 948.7, 13.2, 1317.8, 944],
  ["AUSTIN", 1210, 1264.5, 1065.6, 13.8, 1269, 1060.7],
  ["Beaumont", 1637.5, 1707, 1091.7, 13.2, 1711.5, 1087],
  ["Port Arthur", 1653, 1727, 1120.9, 13.2, 1731.5, 1116.7],
  ["HOUSTON", 1472, 1552.5, 1137.7, 14.4, 1557.5, 1132.3],
  ["Roswell", 390.5, 441.5, 619, 13.2, 446, 614.3],
  ["Hobbs", 568.5, 611, 718.6, 13.2, 615.5, 713.5],
  ["Carlsbad", 418, 476, 759.2, 13.2, 480.7, 754],
  ["Abilene", 970.5, 1021.5, 756.2, 13.2, 1026, 751.3],
  ["Midland", 684, 738.5, 820.8, 13.2, 743, 815.5],
  ["Odessa", 655.5, 703.5, 842.6, 13.2, 708, 837.7],
  ["San Angelo", 862, 938, 897, 13.2, 941.8, 891.7],
  ["Ojinaga", 404, 455, 1166, 13.2, 459.7, 1159],
];

/* shapes are stored at three times map scale, relative to an origin */
const DISTRICTS = [
  ["Lingleville ISD", 1150, 740, "66 67 75 80 73 92 82 96 90 78 97 66 100 72 122 74 132 88 136 100 146 106 158 98 165 113 150 120 140 138 124 143 108 150 104 155 96 148 88 146 80 120 66 118 78 108 66 104 62 96 68 92 64 84"],
  ["Miller Grove ISD", 1450, 560, "154 294 190 294 206 306 209 330 204 338 198 332 178 346 169 357 160 344 139 340 140 318 154 302"],
  ["Kennard ISD", 1450, 840, "373 122 373 112 390 112 394 104 410 120 421 130 420 150 434 152 440 162 455 164 455 174 468 186 456 200 415 236 416 262 410 267 398 256 382 262 364 246 364 232 372 204 322 215 313 200 320 190 338 190 338 172 326 162 342 152 342 138 358 124"],
  ["Burkeville ISD", 1450, 840, "878 283 970 283 990 275 989 306 1001 342 975 350 975 360 995 374 993 384 972 394 946 376 932 370 912 368 906 392 890 390 880 404 870 398 862 322 878 322"],
  ["Abbott ISD", 1150, 740, "562 254 575 256 580 250 586 254 592 248 598 254 620 256 628 264 634 274 630 284 640 300 634 306 624 298 620 288 600 294 574 298 565 290 560 270"],
];

function shape(ox, oy, text) {
  const n = text.split(" ").map(Number);
  const pts = [];
  for (let i = 0; i < n.length; i += 2) pts.push([ox + n[i] / 3, oy + n[i + 1] / 3]);
  return toPath(pts) + "Z";
}

function BaseMap() {
  const riverPath = (p) => toPath(roughen(p, 2.1, 4));
  return (
    <MapSvg viewBox="377 325 1407 844" fill="none" strokeLinejoin="round">
      <path d={CITIES.map(cityBlocks).join("")} fill="#f5f5f3" />
      <g stroke="#f2f2f0" strokeWidth="1">
        <path d="M502.7 325V1169M843.7 325V1169M1184.5 325V1169M1526 325V1169M377 480.5H1784M377 822.3H1784M377 1163.5H1784" stroke="#f0f1ef" strokeWidth="1.2" />
        <path d={CITIES.map(cityStreets).join("")} />
      </g>
      <path d={lines(ROADS, smooth)} stroke="#eeeeec" strokeWidth="1.3" />
      <path d={lines(HIGHWAYS, smooth)} stroke="#e8e8e7" strokeWidth="1.4" />
      <path d={lines(NATION, (p) => toPath(roughen(p, 2, 5)))} stroke="#f4f2f0" strokeWidth="13" />
      <path d={lines(NATION, (p) => toPath(roughen(p, 1.4, 4)))} stroke="#e2d8d9" strokeWidth="2.4" />
      <path d={lines(RIVERS, riverPath)} stroke="#e0e5e8" strokeWidth="1.3" />
      <path d={lines(LAKES, (p) => toPath(roughen(p, 1.5, 3, true)) + "Z")} fill="#d5dadd" />
      <path d={toPath(project("se", GULF)) + "Z"} fill="#d5dadd" />
      <path d={lines(BORDER_RIVERS, riverPath)} stroke="#dbdfe3" strokeWidth="1.4" />
      <path d={lines(BORDER_RIVERS, riverPath)} stroke="#e6d0d3" strokeWidth="1.3" strokeDasharray="2.5 4" />
      <path d={lines(STATE_LINES, toPath)} stroke="#e4cbce" strokeWidth="1.5" strokeDasharray="3 2.4" />
      <g fill="#97a2b0" fontFamily='Inter, "Noto Sans", sans-serif' fontWeight="600">
        {PLACES.map(([name, x1, x2, y, size, mx, my]) => (
          <React.Fragment key={name}>
            <text x={x1} y={y} fontSize={size} textLength={x2 - x1} lengthAdjust="spacingAndGlyphs">
              {name}
            </text>
            {mx > 0 && <rect x={mx - 2} y={my - 2} width="4" height="4" />}
          </React.Fragment>
        ))}
      </g>
      {DISTRICTS.map(([name, ox, oy, pts]) => (
        <path
          key={name}
          d={shape(ox, oy, pts)}
          fill={name === "Abbott ISD" ? "#0000ff" : "#eb3f31"}
          fillOpacity={name === "Abbott ISD" ? 0.7 : 0.75}
          stroke="#222"
          strokeOpacity="0.8"
          strokeWidth="0.7"
        />
      ))}
    </MapSvg>
  );
}

function TexasLogo() {
  return (
    <svg viewBox="30 111 76 120" preserveAspectRatio="none">
      <path d="M50 111H67V138L80 142L95 142L102 145L103 165L105 180L100 192L88 203L83 215L85 230L72 227L66 208L56 192L47 196L38 190L30 165H50Z" fill="#5b9bd5" />
      <path
        d="M92 188L58 127M92 188L56 152M92 188L47 180M92 188L50 165M92 188L72 150M92 188L80 155M92 188L90 155M92 188L100 152M92 188L78 210M92 188L60 188M92 188L101 178"
        stroke="#b9d6f0" strokeWidth="1.1" fill="none" opacity="0.75"
      />
      <g fill="#e6f1fb">
        <ellipse cx="58" cy="127" rx="1.6" ry="2.4" />
        <ellipse cx="56" cy="152" rx="1.6" ry="2.4" />
        <ellipse cx="47" cy="180" rx="1.6" ry="2.4" />
        <ellipse cx="90" cy="155" rx="1.6" ry="2.4" />
        <ellipse cx="78" cy="210" rx="1.6" ry="2.4" />
      </g>
      <ellipse cx="92" cy="188" rx="2" ry="3" fill="#2f5f9e" />
    </svg>
  );
}

const NAV = [
  ["About DistrictMatch", 22.6],
  ["How To Use DistrictMatch", 22],
  ["View my matches", 21],
  ["Why these districts?", 20],
  ["Understand outcomes", 0],
];

const FEATURES = [
  ["Student Teacher Ratio", true],
  ["Student Count", true],
  ["Staff Count", false],
  ["Race/Ethnicity Student %", false],
  ["Economically Disadvantaged Student %", false],
  ["Special Education / 504 Student %", false],
  ["Language Education Student %", false],
  ["Special Populations Student %", false],
  ["Gifted Student %", false],
];

const ROWS = [
  ["Lingleville ISD", "Rural", "Erath"],
  ["Abbott ISD", "Rural", "Hill"],
  ["Miller Grove ISD", "Rural", "Hopkins"],
  ["Kennard ISD", "Rural", "Houston"],
  ["Burkeville ISD", "Rural", "Newton"],
];

export default function App() {
  return (
    <Page>
      <GlobalStyle />
      <Navbar>
        <Brand>
          <TexasLogo />
          DistrictMatch
        </Brand>
        {NAV.map(([item, gap]) => (
          <NavItem key={item} $gap={gap} $active={item === "View my matches"}>
            {item}
          </NavItem>
        ))}
      </Navbar>
      <Body>
        <Sidebar>
          <CollapseRow>
            <svg width="11" height="19" viewBox="0 0 11 19" fill="none" stroke="#3c4043" strokeWidth="1.5" strokeLinecap="round" strokeLinejoin="round">
              <path d="M10 1L1.4 9.5L10 18" />
            </svg>
          </CollapseRow>
          <Field $gap={22.8}>
            <FieldLabel>Select District Name:</FieldLabel>
            <Control>
              ABBOTT ISD
              <svg width="15" height="10" viewBox="0 0 15 10" fill="none" stroke="#343a40" strokeWidth="2" strokeLinecap="round" strokeLinejoin="round">
                <path d="M1.5 1.5L7.5 7.7L13.5 1.5" />
              </svg>
            </Control>
          </Field>
          <Field $gap={23.4}>
            <FieldLabel $tight>Select Feature Groups:</FieldLabel>
            {FEATURES.map(([label, on]) => (
              <CheckItem key={label}>
                <CheckBox $on={on}>
                  {on && (
                    <svg width="16" height="13" viewBox="0 0 16 13" fill="none" stroke="#fff" strokeWidth="3.4" strokeLinecap="round" strokeLinejoin="round">
                      <path d="M2.2 7L6 10.4L13.6 2.4" />
                    </svg>
                  )}
                </CheckBox>
                {label}
              </CheckItem>
            ))}
          </Field>
          <Field $gap={21.4}>
            <FieldLabel>Number of Neighbors</FieldLabel>
            <Control>5</Control>
          </Field>
          <Field $gap={22.3}>
            <FieldLabel>View Outcomes For</FieldLabel>
            <Control>2024</Control>
          </Field>
          <RunButton>Run Model</RunButton>
        </Sidebar>
        <Main>
          <Card>
            <CardHeader>Where Are My Matches Located?</CardHeader>
            <CardBody>
              <MapTitle>View Map Results By:</MapTitle>
              <RadioRow>
                <RadioLabel>
                  <Radio $on />
                  District
                </RadioLabel>
                <RadioLabel>
                  <Radio />
                  County
                </RadioLabel>
              </RadioRow>
              <MapFrame>
                <BaseMap />
                <ZoomControl>
                  <ZoomButton $first>+</ZoomButton>
                  <ZoomButton>−</ZoomButton>
                </ZoomControl>
                <Tooltip>
                  <TooltipRow>
                    <b>District:</b>
                    <span>Abbott ISD</span>
                  </TooltipRow>
                  <TooltipRow>
                    <b>Type:</b>
                    <span>Input District</span>
                  </TooltipRow>
                </Tooltip>
                <Attribution>
                  <svg width="13" height="9" viewBox="0 0 13 9">
                    <path d="M0 0H13V4.5H0Z" fill="#4c7be1" />
                    <path d="M0 4.5H13V9H0Z" fill="#ffd500" />
                  </svg>
                  <a>Leaflet</a> | © <a>OpenStreetMap</a> contributors © <a>CARTO</a>
                </Attribution>
                <FullScreen>
                  <svg width="18" height="17" viewBox="0 0 18 17" fill="none" stroke="#808080" strokeWidth="1.7">
                    <path d="M9 2H15.6V8.6M2.4 8.4V15H9" />
                  </svg>
                </FullScreen>
              </MapFrame>
            </CardBody>
          </Card>
          <Card>
            <CardBody>
              <Intro>The model identified the following districts as being the most similar to yours based on the inputs you selected.</Intro>
              <Table>
                <thead>
                  <tr>
                    <Th $w={321.5}>District</Th>
                    <Th $w={342}>TEA District Type</Th>
                    <Th $w={322}>County</Th>
                  </tr>
                </thead>
                <tbody>
                  {ROWS.map((row) => (
                    <tr key={row[0]}>
                      {row.map((value) => (
                        <Td key={value}>{value}</Td>
                      ))}
                    </tr>
                  ))}
                </tbody>
              </Table>
            </CardBody>
          </Card>
        </Main>
      </Body>
    </Page>
  );
}
